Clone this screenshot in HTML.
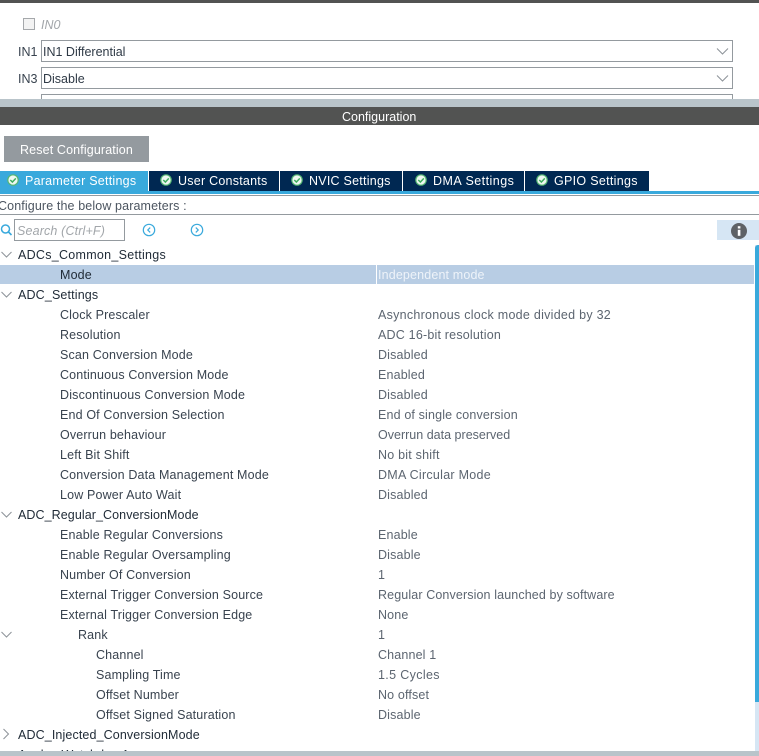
<!DOCTYPE html>
<html><head><meta charset="utf-8"><style>
html,body{margin:0;padding:0;background:#fff}
#p{position:relative;width:759px;height:756px;overflow:hidden;background:#fff;font-family:"Liberation Sans",sans-serif;font-size:12.5px;color:#39434f}
#p div,#p svg{position:absolute}
.t{white-space:nowrap;line-height:14px;height:14px;letter-spacing:.15px;margin-top:.6px}
.h{color:#1f2a36}
.v{color:#5c6570}
.sel{left:41px;width:690px;height:20px;border:1px solid #949a9f;background:#fff}
.tab{top:171px;height:20px;background:#002852;color:#fff;line-height:20px;white-space:nowrap;letter-spacing:.24px}
.k circle{fill:#eef8f1;stroke:#55b673;stroke-width:1.2}
.k path{fill:none;stroke:#3fae5f;stroke-width:1.5}
</style></head><body><div id="p">
<div style="left:0;top:0;width:759px;height:3px;background:#525352"></div>
<div style="left:23px;top:18px;width:10px;height:10px;border:1px solid #a5a8ab;background:#f3f3f3"></div>
<div class="t" style="left:41px;top:17px;color:#a2a6aa;font-style:italic;letter-spacing:0">IN0</div>
<div class="t" style="left:18px;top:44px;letter-spacing:0">IN1</div>
<div class="sel" style="top:40px"></div>
<div class="t" style="left:43px;top:44px;letter-spacing:0;color:#2f3a46">IN1 Differential</div>
<svg style="left:716px;top:47px" width="14" height="9"><path d="M1 1.5 L6.5 7 L12 1.5" fill="none" stroke="#8c9298" stroke-width="1"/></svg>
<div class="t" style="left:18px;top:71px;letter-spacing:0">IN3</div>
<div class="sel" style="top:67px"></div>
<div class="t" style="left:43px;top:71px;letter-spacing:0;color:#2f3a46">Disable</div>
<svg style="left:716px;top:74px" width="14" height="9"><path d="M1 1.5 L6.5 7 L12 1.5" fill="none" stroke="#8c9298" stroke-width="1"/></svg>
<div class="sel" style="top:94px"></div>
<div style="left:0;top:99px;width:759px;height:8px;background:#b9c4ca"></div>
<div style="left:0;top:107px;width:759px;height:18px;background:#525352"></div>
<div class="t" style="left:342px;top:109px;color:#fff;letter-spacing:0">Configuration</div>

<div style="left:4px;top:136px;width:145px;height:26px;background:#949a9f;color:#fff;line-height:28px;text-align:center;letter-spacing:.13px">Reset Configuration</div>

<div class="tab" style="left:0;width:148px;background:#39a9dc"><div style="left:25px;top:0">Parameter Settings</div></div>
<div class="tab" style="left:149px;width:130px"><div style="left:29px;top:0">User Constants</div></div>
<div class="tab" style="left:280px;width:122px"><div style="left:29px;top:0">NVIC Settings</div></div>
<div class="tab" style="left:403px;width:121px"><div style="left:30px;top:0;letter-spacing:.47px">DMA Settings</div></div>
<div class="tab" style="left:525px;width:124px"><div style="left:29px;top:0;letter-spacing:.3px">GPIO Settings</div></div>
<svg class="k" style="left:0;top:171px" width="560" height="20">
<circle cx="13" cy="9" r="5.2"/><path d="M10.3 9 L12.4 11 L15.8 7.4"/>
<circle cx="166" cy="9" r="5.2"/><path d="M163.3 9 L165.4 11 L168.8 7.4"/>
<circle cx="297" cy="9" r="5.2"/><path d="M294.3 9 L296.4 11 L299.8 7.4"/>
<circle cx="421" cy="9" r="5.2"/><path d="M418.3 9 L420.4 11 L423.8 7.4"/>
<circle cx="542" cy="9" r="5.2"/><path d="M539.3 9 L541.4 11 L544.8 7.4"/>
</svg>
<div style="left:0;top:191px;width:759px;height:3px;background:#39a9dc"></div>
<div style="left:0;top:195px;width:759px;height:1px;background:#949a9f"></div>
<div class="t" style="left:-2px;top:198px;letter-spacing:.12px;color:#4c5560">Configure the below parameters :</div>
<div style="left:0;top:214px;width:759px;height:1px;background:#949a9f"></div>

<svg style="left:0;top:223px" width="13" height="14"><circle cx="5.5" cy="6" r="4" fill="none" stroke="#39a9dc" stroke-width="1.5"/><path d="M8.5 9 L11.5 12" stroke="#39a9dc" stroke-width="1.6"/></svg>
<div style="left:14px;top:219px;width:109px;height:20px;border:1px solid #949a9f"></div>
<div class="t" style="left:17px;top:223px;color:#a2a6aa;font-style:italic">Search (Ctrl+F)</div>
<svg style="left:142px;top:223px" width="14" height="14"><circle cx="7" cy="7" r="5.7" fill="none" stroke="#39a9dc" stroke-width="1.2"/><path d="M8.2 4.6 L5.8 7 L8.2 9.4" fill="none" stroke="#39a9dc" stroke-width="1.2"/></svg>
<svg style="left:190px;top:223px" width="14" height="14"><circle cx="7" cy="7" r="5.7" fill="none" stroke="#39a9dc" stroke-width="1.2"/><path d="M5.8 4.6 L8.2 7 L5.8 9.4" fill="none" stroke="#39a9dc" stroke-width="1.2"/></svg>
<div style="left:717px;top:220px;width:42px;height:20px;background:#d6e6f4"></div>
<svg style="left:731px;top:222.5px" width="16" height="16"><circle cx="8" cy="8" r="8" fill="#5e6266"/><rect x="6.8" y="6.8" width="2.6" height="6" fill="#fff"/><rect x="6.8" y="3.2" width="2.6" height="2.3" fill="#fff"/></svg>

<div style="left:0;top:265px;width:754px;height:19px;background:#b8cde4"></div>
<div style="left:376px;top:265px;width:1px;height:19px;background:#fff"></div>
<div style="left:755px;top:245px;width:4px;height:506px;background:#d6e6f4"></div>
<div style="left:755px;top:245px;width:4px;height:457px;background:#39a9dc;border-radius:3px 0 0 0"></div>

<svg style="left:0;top:248px" width="14" height="500" fill="none" stroke="#8c9298" stroke-width="1">
<path d="M1.5 4 L6.5 9 L11.5 4"/>
<path d="M1.5 44 L6.5 49 L11.5 44"/>
<path d="M1.5 264 L6.5 269 L11.5 264"/>
<path d="M1.5 384 L6.5 389 L11.5 384"/>
<path d="M3.5 481 L8.5 486 L3.5 491"/>
</svg>

<div class="t h" style="left:18px;top:247px;letter-spacing:.28px">ADCs_Common_Settings</div>
<div class="t h" style="left:60px;top:267px">Mode</div>
<div class="t" style="left:378px;top:267px;color:#eef3f9">Independent mode</div>
<div class="t h" style="left:18px;top:287px">ADC_Settings</div>
<div class="t" style="left:60px;top:307px">Clock Prescaler</div><div class="t v" style="left:378px;top:307px;letter-spacing:.27px">Asynchronous clock mode divided by 32</div>
<div class="t" style="left:60px;top:327px">Resolution</div><div class="t v" style="left:378px;top:327px;letter-spacing:.2px">ADC 16-bit resolution</div>
<div class="t" style="left:60px;top:347px">Scan Conversion Mode</div><div class="t v" style="left:378px;top:347px">Disabled</div>
<div class="t" style="left:60px;top:367px">Continuous Conversion Mode</div><div class="t v" style="left:378px;top:367px">Enabled</div>
<div class="t" style="left:60px;top:387px;letter-spacing:.18px">Discontinuous Conversion Mode</div><div class="t v" style="left:378px;top:387px">Disabled</div>
<div class="t" style="left:60px;top:407px">End Of Conversion Selection</div><div class="t v" style="left:378px;top:407px">End of single conversion</div>
<div class="t" style="left:60px;top:427px">Overrun behaviour</div><div class="t v" style="left:378px;top:427px;letter-spacing:.01px">Overrun data preserved</div>
<div class="t" style="left:60px;top:447px">Left Bit Shift</div><div class="t v" style="left:378px;top:447px;letter-spacing:.22px">No bit shift</div>
<div class="t" style="left:60px;top:467px">Conversion Data Management Mode</div><div class="t v" style="left:378px;top:467px;letter-spacing:.27px">DMA Circular Mode</div>
<div class="t" style="left:60px;top:487px">Low Power Auto Wait</div><div class="t v" style="left:378px;top:487px">Disabled</div>
<div class="t h" style="left:18px;top:507px;letter-spacing:.08px">ADC_Regular_ConversionMode</div>
<div class="t" style="left:60px;top:527px">Enable Regular Conversions</div><div class="t v" style="left:378px;top:527px">Enable</div>
<div class="t" style="left:60px;top:547px">Enable Regular Oversampling</div><div class="t v" style="left:378px;top:547px">Disable</div>
<div class="t" style="left:60px;top:567px">Number Of Conversion</div><div class="t v" style="left:378px;top:567px">1</div>
<div class="t" style="left:60px;top:587px">External Trigger Conversion Source</div><div class="t v" style="left:378px;top:587px;letter-spacing:.12px">Regular Conversion launched by software</div>
<div class="t" style="left:60px;top:607px">External Trigger Conversion Edge</div><div class="t v" style="left:378px;top:607px">None</div>
<div class="t" style="left:78px;top:627px">Rank</div><div class="t v" style="left:378px;top:627px">1</div>
<div class="t" style="left:96px;top:647px">Channel</div><div class="t v" style="left:378px;top:647px">Channel 1</div>
<div class="t" style="left:96px;top:667px">Sampling Time</div><div class="t v" style="left:378px;top:667px;letter-spacing:.35px">1.5 Cycles</div>
<div class="t" style="left:96px;top:687px">Offset Number</div><div class="t v" style="left:378px;top:687px">No offset</div>
<div class="t" style="left:96px;top:707px">Offset Signed Saturation</div><div class="t v" style="left:378px;top:707px">Disable</div>
<div class="t h" style="left:18px;top:727px;letter-spacing:.12px">ADC_Injected_ConversionMode</div>
<div class="t h" style="left:18px;top:747px">Analog Watchdog 1</div>
<div style="left:0;top:751px;width:759px;height:5px;background:#b9c4ca"></div>
</div></body></html>
